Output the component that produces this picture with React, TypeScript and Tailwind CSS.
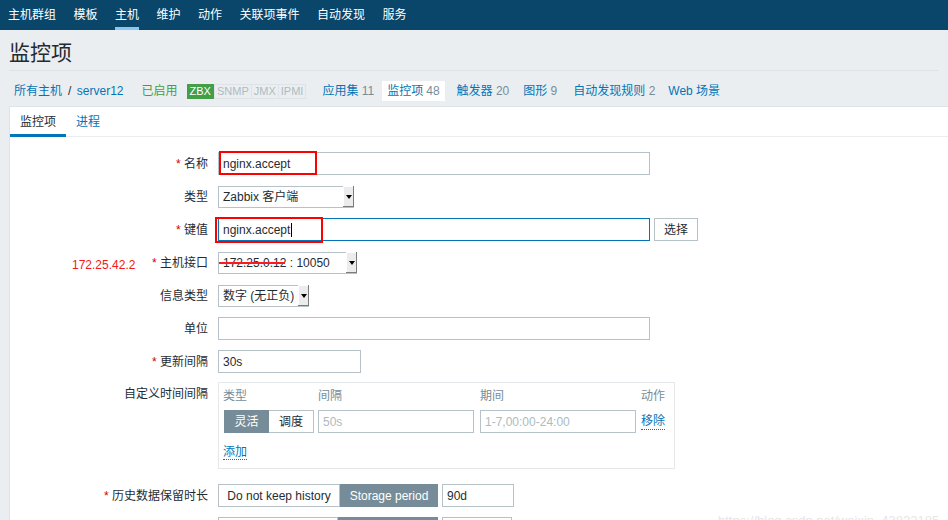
import React from "react";

const topNav = ["主机群组", "模板", "主机", "维护", "动作", "关联项事件", "自动发现", "服务"];

const Star = () => <span className="text-[#d40000]">* </span>;

const Select: React.FC<{ w: string; children: React.ReactNode; strike?: boolean }> = ({ w, children, strike }) => (
  <div className={`relative flex h-[22px] items-center justify-between border border-[#b6c2c8] bg-white ${w}`}>
    <span className="whitespace-nowrap pl-[4px]">{children}</span>
    <span className="mr-[-1px] flex h-[21px] w-[11px] items-center justify-center bg-[#ececec] shadow-[inset_-1px_-1px_0_#7c7c7c,inset_1px_1px_0_#ffffff]">
      <span className="h-0 w-0 border-x-[3px] border-t-[4px] border-x-transparent border-t-black" />
    </span>
    {strike && <span className="absolute left-0 top-[9px] h-[2px] w-[66px] bg-[#ff1a1a]" />}
  </div>
);

const Row: React.FC<{ label: React.ReactNode; children: React.ReactNode; top?: boolean; extra?: React.ReactNode }> = ({
  label,
  children,
  top,
  extra,
}) => (
  <div className="flex">
    <div
      className={`relative flex w-[208px] shrink-0 justify-end pr-[10px] ${top ? "items-start pt-[3px]" : "h-[23px] items-center"}`}
    >
      {extra}
      <span className="whitespace-nowrap">{label}</span>
    </div>
    <div className="flex items-center gap-[4px]">{children}</div>
  </div>
);

export default function App() {
  return (
    <div className="relative h-[520px] w-[948px] overflow-hidden bg-[#ebeef0] font-['Liberation_Sans','Noto_Sans_CJK_SC',sans-serif] text-[12px] text-[#1f2c33]">
      {/* top menu */}
      <div className="flex h-[30px] items-center gap-[17.5px] bg-[#0a466a] pl-[8px] text-white">
        {topNav.map((t) => (
          <span key={t} className="relative flex h-full items-center">
            {t}
            {t === "主机" && <span className="absolute bottom-0 left-0 right-0 h-[3px] bg-[#8ec5ef]" />}
          </span>
        ))}
      </div>

      {/* title */}
      <div className="mx-[9px] flex h-[41px] items-center border-b border-[#dde3e6] pt-[4px]">
        <h1 className="text-[21px] leading-none">监控项</h1>
      </div>

      {/* host nav */}
      <div className="flex h-[37px] items-center pl-[14px] pt-[3px] text-[#0275b8]">
        <span>所有主机</span>
        <span className="ml-[6px] text-[#1f2c33]">/</span>
        <span className="ml-[5.5px]">server12</span>
        <span className="ml-[18px] text-[#429e47]">已启用</span>
        <span className="ml-[9px] flex text-[11px] leading-[13px]">
          <span className="border border-[#429e47] bg-[#429e47] px-[2px] text-white">ZBX</span>
          <span className="border border-[#dde3e6] bg-[#ebeef0] px-[2px] text-[#acbbc2]">SNMP</span>
          <span className="border border-l-0 border-[#dde3e6] bg-[#ebeef0] px-[2px] text-[#acbbc2]">JMX</span>
          <span className="border border-l-0 border-[#dde3e6] bg-[#ebeef0] px-[2px] text-[#acbbc2]">IPMI</span>
        </span>
        <span className="ml-[16px]">
          应用集 <span className="text-[#768d99]">11</span>
        </span>
        <span className="ml-[8px] flex h-[20px] items-center bg-white px-[5px]">
          监控项 <span className="ml-[3px] text-[#768d99]">48</span>
        </span>
        <span className="ml-[12px]">
          触发器 <span className="text-[#768d99]">20</span>
        </span>
        <span className="ml-[14px]">
          图形 <span className="text-[#768d99]">9</span>
        </span>
        <span className="ml-[16px]">
          自动发现规则 <span className="text-[#768d99]">2</span>
        </span>
        <span className="ml-[13px]">Web 场景</span>
      </div>

      {/* panel */}
      <div className="ml-[9px] mt-[-2px] h-[420px] border-l border-t border-[#dde3e6] bg-white">
        <div className="flex h-[30px] border-b border-[#ebeef0]">
          <div className="relative flex items-center px-[10px]">
            监控项
            <span className="absolute bottom-[-1px] left-0 right-0 h-[3px] bg-[#0275b8]" />
          </div>
          <div className="flex items-center px-[10px] text-[#0275b8]">进程</div>
        </div>

        <div className="flex flex-col gap-[10px] pt-[15px]">
          <Row
            label={
              <>
                <Star />
                名称
              </>
            }
          >
            <div className="relative flex h-[23px] w-[432px] items-center border border-[#b6c2c8] pl-[4px]">
              nginx.accept
              <span className="absolute left-[0px] top-[-2px] h-[24px] w-[98px] border-2 border-[#ff0000]" />
            </div>
          </Row>
          <Row label="类型">
            <Select w="w-[136px]">Zabbix 客户端</Select>
          </Row>
          <Row
            label={
              <>
                <Star />
                键值
              </>
            }
          >
            <div className="relative flex h-[23px] w-[432px] items-center border border-[#0275b8] pl-[4px]">
              nginx.accept
              <span className="ml-[1px] h-[14px] w-[1px] bg-black" />
              <span className="absolute left-[-4px] top-[-2px] h-[26px] w-[108px] border-2 border-[#ff0000]" />
            </div>
            <div className="flex h-[23px] items-center border border-[#b6c2c8] bg-white px-[9px]">选择</div>
          </Row>
          <Row
            label={
              <>
                <Star />
                主机接口
              </>
            }
            extra={<span className="absolute left-[62px] top-[5px] text-[#f01818]">172.25.42.2</span>}
          >
            <Select w="w-[139px]" strike>
              172.25.0.12 : 10050
            </Select>
          </Row>
          <Row label="信息类型">
            <Select w="w-[91px]">数字 (无正负)</Select>
          </Row>
          <Row label="单位">
            <div className="h-[23px] w-[432px] border border-[#b6c2c8]" />
          </Row>
          <Row
            label={
              <>
                <Star />
                更新间隔
              </>
            }
          >
            <div className="flex h-[23px] w-[143px] items-center border border-[#b6c2c8] pl-[4px]">30s</div>
          </Row>
          <div className="mt-[-1px]">
            <Row label="自定义时间间隔" top>
              <div className="h-[87px] w-[457px] border border-[#e4e8eb] px-[4px] pt-[6px]">
                <div className="flex h-[14px] items-center text-[#768d99]">
                  <span className="w-[95px]">类型</span>
                  <span className="w-[162px]">间隔</span>
                  <span className="w-[161px]">期间</span>
                  <span>动作</span>
                </div>
                <div className="mt-[7px] flex h-[23px] items-center">
                  <div className="ml-[1px] flex h-[23px]">
                    <span className="flex w-[45px] items-center justify-center border border-[#768d99] bg-[#768d99] text-white">灵活</span>
                    <span className="flex w-[45px] items-center justify-center border border-l-0 border-[#b6c2c8]">调度</span>
                  </div>
                  <div className="ml-[4px] flex h-[23px] w-[156px] items-center border border-[#b6c2c8] pl-[4px] text-[#acbbc2]">50s</div>
                  <div className="ml-[6px] flex h-[23px] w-[156px] items-center border border-[#b6c2c8] pl-[4px] text-[#acbbc2]">
                    1-7,00:00-24:00
                  </div>
                  <span className="ml-[5px] border-b border-dotted border-[#0275b8] leading-[15px] text-[#0275b8]">移除</span>
                </div>
                <div className="mt-[10px]">
                  <span className="border-b border-dotted border-[#0275b8] leading-[15px] text-[#0275b8]">添加</span>
                </div>
              </div>
            </Row>
          </div>
          <div className="mt-[5px]">
            <Row
              label={
                <>
                  <Star />
                  历史数据保留时长
                </>
              }
            >
              <div className="flex h-[23px]">
                <span className="flex w-[122px] items-center justify-center border border-[#b6c2c8]">Do not keep history</span>
                <span className="flex w-[98px] items-center justify-center border border-[#768d99] bg-[#768d99] text-white">
                  Storage period
                </span>
              </div>
              <div className="flex h-[23px] w-[72px] items-center border border-[#b6c2c8] pl-[4px]">90d</div>
            </Row>
          </div>
          <Row label={<span className="text-[#ececec]">* 趋势存储时间</span>}>
            <div className="flex h-[23px]">
              <span className="flex w-[120px] items-center justify-center border border-[#b6c2c8]">Do not keep trends</span>
              <span className="flex w-[100px] items-center justify-center border border-[#768d99] bg-[#768d99] text-white">
                Storage period
              </span>
            </div>
            <div className="flex h-[23px] w-[70px] items-center border border-[#b6c2c8] pl-[4px]">365d</div>
          </Row>
        </div>
      </div>

      <span className="absolute left-[718px] top-[511px] whitespace-nowrap text-[13px] text-[#e6e6e6]">
        https://blog.csdn.net/weixin_43822185
      </span>
    </div>
  );
}
